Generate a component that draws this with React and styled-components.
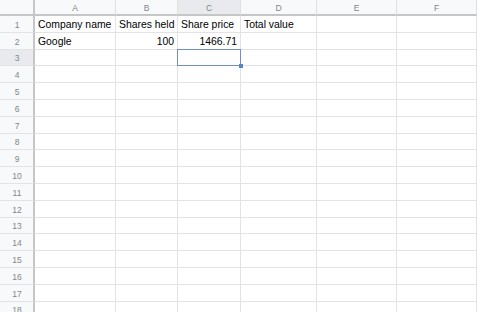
import React from "react";
import styled, { createGlobalStyle, css } from "styled-components";

const Global = createGlobalStyle`
  html, body { margin: 0; padding: 0; background: #fff; overflow: hidden; }
  body { font-family: "Liberation Sans", Arial, sans-serif; }
`;

const COLS = [
  { key: "A", w: 81 },
  { key: "B", w: 62 },
  { key: "C", w: 63 },
  { key: "D", w: 76 },
  { key: "E", w: 80 },
  { key: "F", w: 80 },
];

const Sheet = styled.div`
  display: grid;
  grid-template-columns: 35px ${COLS.map((c) => c.w + "px").join(" ")};
  grid-template-rows: 16px;
  grid-auto-rows: 16.8px;
  width: 477px;
  height: 312px;
  overflow: hidden;
`;

const Corner = styled.div`
  box-sizing: border-box;
  background: #f8f9fa;
  border-right: 2px solid #c4c7c5;
  border-bottom: 2px solid #c4c7c5;
`;

const ColHead = styled.div`
  box-sizing: border-box;
  background: ${(p) => (p.$active ? "#e8eaed" : "#f8f9fa")};
  border-right: 1px solid #e0e0e0;
  border-bottom: 2px solid #c4c7c5;
  color: #80868b;
  font-size: 8.5px;
  display: flex;
  align-items: center;
  justify-content: center;
  padding-top: 2px;
`;

const RowHead = styled.div`
  box-sizing: border-box;
  background: ${(p) => (p.$active ? "#e8eaed" : "#f8f9fa")};
  border-right: 2px solid #c4c7c5;
  border-bottom: 1px solid #e3e3e3;
  color: #80868b;
  font-size: 8.5px;
  display: flex;
  align-items: center;
  justify-content: center;
  padding-left: 1px;
  padding-top: 2px;
`;

const Cell = styled.div`
  position: relative;
  box-sizing: border-box;
  border-right: 1px solid #e3e3e3;
  border-bottom: 1px solid #e3e3e3;
  color: #000;
  font-size: 10.4px;
  line-height: 12px;
  display: flex;
  align-items: flex-end;
  justify-content: ${(p) => (p.$num ? "flex-end" : "flex-start")};
  padding: 0 3px 1px;
  white-space: nowrap;
  ${(p) =>
    p.$selected &&
    css`
      &::after {
        content: "";
        position: absolute;
        left: -1px;
        top: -1px;
        right: -1px;
        bottom: -1px;
        border: 1.6px solid #6f8fc6;
        z-index: 2;
      }
      &::before {
        content: "";
        position: absolute;
        right: -3px;
        bottom: -3px;
        width: 4px;
        height: 4px;
        background: #5f82c0;
        z-index: 3;
      }
    `}
`;

const data = {
  1: { A: "Company name", B: "Shares held", C: "Share price", D: "Total value" },
  2: { A: "Google", B: "100", C: "1466.71" },
};
const numeric = { 2: { B: true, C: true } };

export default function App() {
  const rows = Array.from({ length: 18 }, (_, i) => i + 1);
  return (
    <>
      <Global />
      <Sheet>
        <Corner />
        {COLS.map((c) => (
          <ColHead key={c.key} $active={c.key === "C"}>
            {c.key}
          </ColHead>
        ))}
        {rows.map((r) => (
          <React.Fragment key={r}>
            <RowHead $active={r === 3}>{r}</RowHead>
            {COLS.map((c) => (
              <Cell
                key={c.key}
                $num={numeric[r] && numeric[r][c.key]}
                $selected={r === 3 && c.key === "C"}
              >
                {data[r] ? data[r][c.key] : null}
              </Cell>
            ))}
          </React.Fragment>
        ))}
      </Sheet>
    </>
  );
}
